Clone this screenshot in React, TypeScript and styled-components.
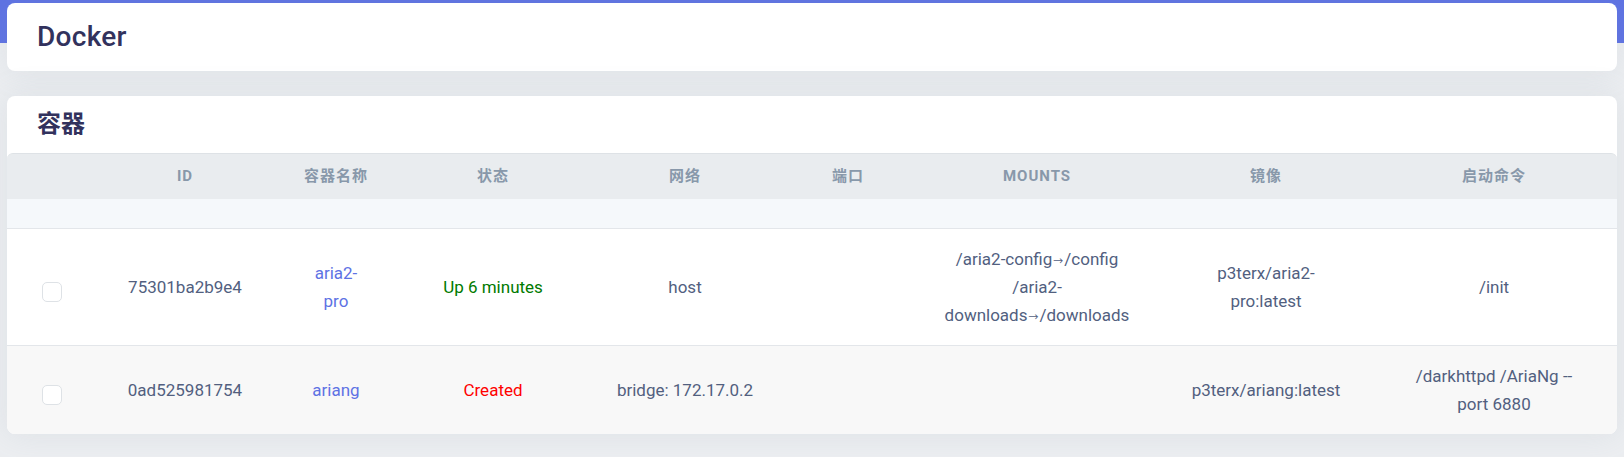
import React from "react";
import styled, { createGlobalStyle } from "styled-components";

const GlobalStyle = createGlobalStyle`
  html, body { margin: 0; padding: 0; }
  body {
    font-family: Roboto, "Noto Sans CJK SC", sans-serif;
    background: #eceef1;
    -webkit-font-smoothing: antialiased;
  }
`;

const Page = styled.div`
  min-height: 457px;
  box-sizing: border-box;
  padding: 3px 7px 0;
  background: linear-gradient(to bottom, #5e72e4 0, #5e72e4 43px, #eceef1 43px);
  display: flex;
  flex-direction: column;
  gap: 25px;
`;

const Card = styled.section`
  background: #fff;
  border-radius: 8px;
  box-shadow: 0 0 32px rgba(136, 152, 170, 0.15);
  overflow: hidden;
`;

const PageTitle = styled.h1`
  margin: 0;
  padding: 18px 30px;
  font-size: 28px;
  line-height: 32px;
  font-weight: 500;
  letter-spacing: 0.3px;
  color: #32325d;
`;

const SectionTitle = styled.h2`
  margin: 0;
  padding: 12px 30px;
  font-size: 24px;
  line-height: 33px;
  font-weight: 700;
  color: #32325d;
`;

const Table = styled.table`
  width: 100%;
  border-collapse: separate;
  border-spacing: 0;
  table-layout: fixed;
`;

const HeadCell = styled.th`
  background: #e9ecef;
  border-top: 1px solid #dee2e6;
  padding: 12px 0;
  line-height: 21px;
  font-size: 15px;
  font-weight: 700;
  letter-spacing: 1px;
  text-transform: uppercase;
  color: #8898aa;
  text-align: center;
  &:first-child { border-top-left-radius: 6px; }
  &:last-child { border-top-right-radius: 6px; }
`;

const FillerCell = styled.td`
  padding: 0;
  background: #f5f8fb;
  border-bottom: 1px solid #e3e6ea;
`;

const Filler = styled.div`
  height: 29px;
`;

const Row = styled.tr<{ $shade: boolean }>`
  background: ${(p) => (p.$shade ? "#f8f8f8" : "#ffffff")};
  & > td { border-bottom: 1px solid #e3e6ea; }
  &:last-child > td { border-bottom: none; }
`;

const Cell = styled.td`
  padding: 16px 0;
  font-size: 17px;
  line-height: 28px;
  color: #525f7f;
  text-align: center;
  vertical-align: middle;
`;

const Inner = styled.div<{ $max: number }>`
  max-width: ${(p) => p.$max}px;
  margin: 0 auto;
`;

const Check = styled.span`
  display: block;
  width: 20px;
  height: 20px;
  box-sizing: border-box;
  margin: 10px auto 0;
  border: 1px solid #dee2e6;
  border-radius: 5px;
  background: #fff;
`;

const NameLink = styled.a`
  color: #5e72e4;
  text-decoration: none;
`;

const Status = styled.span<{ $tone: "running" | "created" }>`
  color: ${(p) => (p.$tone === "running" ? "#007a00" : "#ff0000")};
`;

const MountLine = styled.div``;

const Arrow = styled.span`
  font-size: 10px;
  line-height: 0;
  margin: 0 1px;
`;

const columns = [
  { key: "check", label: "", width: 90, max: 60 },
  { key: "id", label: "ID", width: 176, max: 150 },
  { key: "name", label: "容器名称", width: 126, max: 60 },
  { key: "status", label: "状态", width: 188, max: 160 },
  { key: "network", label: "网络", width: 196, max: 170 },
  { key: "ports", label: "端口", width: 130, max: 100 },
  { key: "mounts", label: "Mounts", width: 248, max: 200 },
  { key: "image", label: "镜像", width: 210, max: 154 },
  { key: "cmd", label: "启动命令", width: 246, max: 172 },
];

type Mount = { source: string; target: string };

type Container = {
  id: string;
  name: string;
  status: string;
  state: "running" | "created";
  network: string;
  ports: string;
  mounts: Mount[];
  image: string;
  cmd: string;
};

const containers: Container[] = [
  {
    id: "75301ba2b9e4",
    name: "aria2-pro",
    status: "Up 6 minutes",
    state: "running",
    network: "host",
    ports: "",
    mounts: [
      { source: "/aria2-config", target: "/config" },
      { source: "/aria2-downloads", target: "/downloads" },
    ],
    image: "p3terx/aria2-pro:latest",
    cmd: "/init",
  },
  {
    id: "0ad525981754",
    name: "ariang",
    status: "Created",
    state: "created",
    network: "bridge: 172.17.0.2",
    ports: "",
    mounts: [],
    image: "p3terx/ariang:latest",
    cmd: "/darkhttpd /AriaNg --port 6880",
  },
];

const max = (key: string) => columns.find((c) => c.key === key)!.max;

export default function App() {
  return (
    <>
      <GlobalStyle />
      <Page>
        <Card>
          <PageTitle>Docker</PageTitle>
        </Card>
        <Card>
          <SectionTitle>容器</SectionTitle>
          <Table>
            <colgroup>
              {columns.map((c) => (
                <col key={c.key} style={{ width: c.width }} />
              ))}
            </colgroup>
            <thead>
              <tr>
                {columns.map((c) => (
                  <HeadCell key={c.key}>{c.label}</HeadCell>
                ))}
              </tr>
            </thead>
            <tbody>
              <tr>
                <FillerCell colSpan={columns.length}>
                  <Filler />
                </FillerCell>
              </tr>
              {containers.map((c, i) => (
                <Row key={c.id} $shade={i % 2 === 1}>
                  <Cell>
                    <Check role="checkbox" aria-checked="false" />
                  </Cell>
                  <Cell>
                    <Inner $max={max("id")}>{c.id}</Inner>
                  </Cell>
                  <Cell>
                    <Inner $max={max("name")}>
                      <NameLink href="#">{c.name}</NameLink>
                    </Inner>
                  </Cell>
                  <Cell>
                    <Inner $max={max("status")}>
                      <Status $tone={c.state}>{c.status}</Status>
                    </Inner>
                  </Cell>
                  <Cell>
                    <Inner $max={max("network")}>{c.network}</Inner>
                  </Cell>
                  <Cell>
                    <Inner $max={max("ports")}>{c.ports}</Inner>
                  </Cell>
                  <Cell>
                    <Inner $max={max("mounts")}>
                      {c.mounts.map((m) => (
                        <MountLine key={m.source}>
                          {m.source}
                          <Arrow>→</Arrow>
                          {m.target}
                        </MountLine>
                      ))}
                    </Inner>
                  </Cell>
                  <Cell>
                    <Inner $max={max("image")}>{c.image}</Inner>
                  </Cell>
                  <Cell>
                    <Inner $max={max("cmd")}>{c.cmd}</Inner>
                  </Cell>
                </Row>
              ))}
            </tbody>
          </Table>
        </Card>
      </Page>
    </>
  );
}
